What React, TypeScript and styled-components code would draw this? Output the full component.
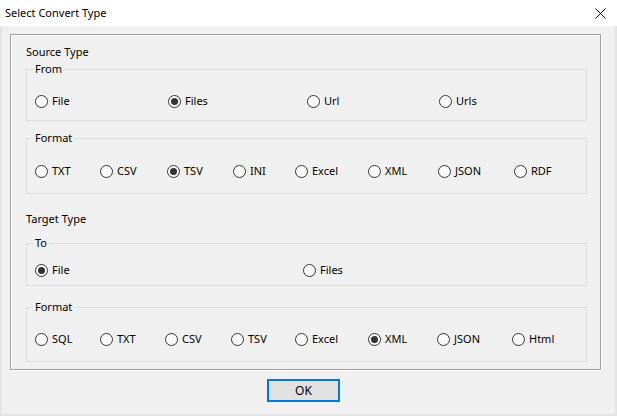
import React from "react";
import styled, { createGlobalStyle } from "styled-components";

const GlobalStyle = createGlobalStyle`
  html, body {
    margin: 0;
    padding: 0;
    background: #e3e3e3;
  }
  body {
    font-family: "Noto Sans", "Noto Sans CJK SC", sans-serif;
    font-size: 11px;
    color: #000;
  }
`;

const Window = styled.div`
  width: 617px;
  height: 416px;
  box-sizing: border-box;
  display: flex;
  flex-direction: column;
  background: #f0f0f0;
  border: 2px solid #e3e3e3;
  border-top: none;
`;

const TitleBar = styled.div`
  height: 26px;
  flex: none;
  display: flex;
  align-items: center;
  justify-content: space-between;
  background: #fff;
  margin: 0 -2px;
  padding: 0 11px 0 5px;
`;

const Title = styled.span`
  line-height: 16px;
`;

const CloseButton = styled.button`
  width: 12px;
  height: 12px;
  padding: 0;
  border: none;
  background: none;
  display: flex;
  align-items: center;
  justify-content: center;
`;

const Body = styled.div`
  flex: 1;
  display: flex;
  flex-direction: column;
  padding: 8px 14px 0 8px;
`;

const OuterGroup = styled.div`
  border: 1px solid #a0a0a0;
  box-shadow: inset 1px 1px 0 #fff, 1px 1px 0 #fff;
  padding: 9px 13px 0 15px;
  height: 336px;
  box-sizing: border-box;
  display: flex;
  flex-direction: column;
`;

const SectionTitle = styled.div<{ $gap?: number }>`
  line-height: 16px;
  height: 16px;
  margin-top: ${(p) => p.$gap ?? 0}px;
`;

const GroupBox = styled.fieldset<{ $height: number; $gap: number }>`
  margin: ${(p) => p.$gap}px 0 0 0;
  padding: 0 8px;
  border: 1px solid #dcdcdc;
  height: ${(p) => p.$height}px;
  box-sizing: border-box;
  min-width: 0;
`;

const Legend = styled.legend`
  padding: 0 2px;
  margin-left: -2px;
  line-height: 16px;
`;

const OptionRow = styled.div<{ $cols: string; $top: number }>`
  display: grid;
  grid-template-columns: ${(p) => p.$cols};
  margin-top: ${(p) => p.$top}px;
  height: 16px;
`;

const Option = styled.label`
  display: flex;
  align-items: center;
  gap: 4px;
  line-height: 16px;
  white-space: nowrap;
`;

const RadioCircle = styled.span<{ $checked: boolean }>`
  width: 13px;
  height: 13px;
  box-sizing: border-box;
  border: 1px solid #333;
  border-radius: 50%;
  background: #fff;
  display: flex;
  align-items: center;
  justify-content: center;
  flex: none;

  &::after {
    content: "";
    display: ${(p) => (p.$checked ? "block" : "none")};
    width: 7px;
    height: 7px;
    border-radius: 50%;
    background: #333;
  }
`;

const Footer = styled.div`
  display: flex;
  padding: 9px 0 0 257px;
`;

const OkButton = styled.button`
  width: 73px;
  height: 23px;
  box-sizing: border-box;
  border: 2px solid #0078d7;
  background: #e1e1e1;
  font: inherit;
  font-size: 12px;
  color: #000;
  padding: 0;
`;

type RadioProps = { label: string; checked?: boolean };

const Radio = ({ label, checked = false }: RadioProps) => (
  <Option>
    <RadioCircle $checked={checked} />
    {label}
  </Option>
);

type Group = {
  legend: string;
  cols: string;
  height: number;
  gap: number;
  top: number;
  options: string[];
  selected: string;
};

const sourceGroups: Group[] = [
  {
    legend: "From",
    cols: "133px 139px 132px 1fr",
    height: 60,
    gap: 1,
    top: 16,
    options: ["File", "Files", "Url", "Urls"],
    selected: "Files",
  },
  {
    legend: "Format",
    cols: "65px 67px 66px 62px 73px 70px 76px 1fr",
    height: 64,
    gap: 9,
    top: 17,
    options: ["TXT", "CSV", "TSV", "INI", "Excel", "XML", "JSON", "RDF"],
    selected: "TSV",
  },
];

const targetGroups: Group[] = [
  {
    legend: "To",
    cols: "268px 1fr",
    height: 51,
    gap: 8,
    top: 11,
    options: ["File", "Files"],
    selected: "File",
  },
  {
    legend: "Format",
    cols: "65px 65px 66px 64px 73px 69px 75px 1fr",
    height: 63,
    gap: 13,
    top: 16,
    options: ["SQL", "TXT", "CSV", "TSV", "Excel", "XML", "JSON", "Html"],
    selected: "XML",
  },
];

const renderGroup = (g: Group) => (
  <GroupBox key={g.legend + g.selected} $height={g.height} $gap={g.gap}>
    <Legend>{g.legend}</Legend>
    <OptionRow $cols={g.cols} $top={g.top}>
      {g.options.map((o) => (
        <Radio key={o} label={o} checked={o === g.selected} />
      ))}
    </OptionRow>
  </GroupBox>
);

export default function App() {
  return (
    <>
      <GlobalStyle />
      <Window>
        <TitleBar>
          <Title>Select Convert Type</Title>
          <CloseButton aria-label="Close">
            <svg width="11" height="11" viewBox="0 0 11 11">
              <path d="M0.5 0.5 L10.5 10.5 M10.5 0.5 L0.5 10.5" stroke="#000" strokeWidth="1" />
            </svg>
          </CloseButton>
        </TitleBar>
        <Body>
          <OuterGroup>
            <SectionTitle>Source Type</SectionTitle>
            {sourceGroups.map(renderGroup)}
            <SectionTitle $gap={17}>Target Type</SectionTitle>
            {targetGroups.map(renderGroup)}
          </OuterGroup>
          <Footer>
            <OkButton>OK</OkButton>
          </Footer>
        </Body>
      </Window>
    </>
  );
}
